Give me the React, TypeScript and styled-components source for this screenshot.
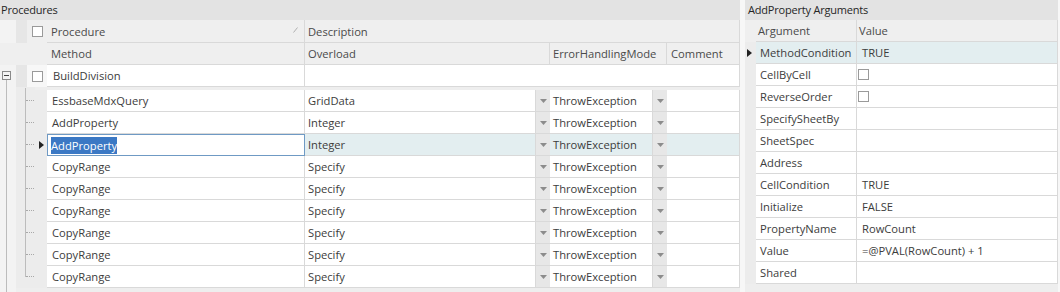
import React from 'react';
import styled, { createGlobalStyle, css } from 'styled-components';

const GlobalStyle = createGlobalStyle`
  html, body {
    margin: 0;
    padding: 0;
    background: #f7f7f7;
  }
  body {
    font-family: "Open Sans", "Noto Sans", sans-serif;
    font-size: 11.2px;
    color: #3c3c3c;
  }
`;

const LINE = '#d9d9d9';
const SELECTED_BG = '#e3eef0';

const Page = styled.div`
  display: flex;
  width: 1060px;
  height: 292px;
  overflow: hidden;
`;

const Panel = styled.div<{ $width?: number }>`
  display: flex;
  flex-direction: column;
  ${p => p.$width ? css`width: ${p.$width}px;` : css`flex: 1; margin: 0 2px 0 5px;`}
  background: #eeeeee;
`;

const PanelTitle = styled.div<{ $pad: number }>`
  height: 20px;
  line-height: 19px;
  padding-left: ${p => p.$pad}px;
  background: #e3e3e3;
  font-size: 11px;
  letter-spacing: -0.2px;
  color: #262626;
`;

const Row = styled.div<{ $h?: number }>`
  display: flex;
  height: ${p => p.$h ?? 22}px;
  flex-shrink: 0;
`;

const Gutter = styled.div<{ $w: number; $bg?: string }>`
  position: relative;
  width: ${p => p.$w}px;
  flex-shrink: 0;
  background: ${p => p.$bg ?? 'transparent'};
  display: flex;
  align-items: center;
  justify-content: center;
`;

const Cell = styled.div<{ $w?: number; $bg?: string; $pad?: number; $header?: boolean }>`
  ${p => p.$w ? css`width: ${p.$w}px; flex-shrink: 0;` : css`flex: 1;`}
  box-sizing: border-box;
  display: flex;
  align-items: center;
  padding-left: ${p => p.$pad ?? 4}px;
  background: ${p => p.$bg ?? '#ffffff'};
  border-right: 1px solid ${LINE};
  border-bottom: 1px solid ${LINE};
  color: ${p => p.$header ? '#4a4a4a' : '#3c3c3c'};
  white-space: nowrap;
  overflow: hidden;
  position: relative;
`;

const FocusCell = styled(Cell)`
  border: 1px solid #6f9ac4;
  padding-left: 3px;
`;

const Highlight = styled.span`
  background: #3b78c4;
  color: #ffffff;
  padding: 1px 0;
`;

const DropButton = styled.div`
  width: 14px;
  flex-shrink: 0;
  box-sizing: border-box;
  background: #e7e7e7;
  border-bottom: 1px solid ${LINE};
  display: flex;
  align-items: center;
  justify-content: center;
`;

const CheckBox = styled.span<{ $shift?: number }>`
  display: inline-block;
  width: 9px;
  height: 9px;
  border: 1px solid #9a9a9a;
  background: #ffffff;
  margin-left: ${p => p.$shift ?? 0}px;
`;

const Expander = styled.span`
  position: absolute;
  left: 2px;
  top: 6px;
  width: 7px;
  height: 7px;
  border: 1px solid #8a8a8a;
  background: #f4f4f4;
  &::after {
    content: '';
    position: absolute;
    left: 1px;
    top: 3px;
    width: 5px;
    height: 1px;
    background: #444;
  }
`;

const VLine = styled.span<{ $x: number; $top?: number; $bottom?: number }>`
  position: absolute;
  left: ${p => p.$x}px;
  top: ${p => p.$top ?? 0}px;
  bottom: ${p => p.$bottom ?? 0}px;
  border-left: 1px solid #bcbcbc;
`;

const HDots = styled.span<{ $x: number; $w: number }>`
  position: absolute;
  left: ${p => p.$x}px;
  top: 10px;
  width: ${p => p.$w}px;
  border-top: 1px dotted #a8a8a8;
`;

const Marker = styled.span<{ $x: number }>`
  position: absolute;
  left: ${p => p.$x}px;
  top: 50%;
  margin-top: -4px;
  width: 0;
  height: 0;
  border-top: 4px solid transparent;
  border-bottom: 4px solid transparent;
  border-left: 5px solid #222;
`;

const SortGlyph = styled.svg`
  position: absolute;
  right: 6px;
  top: 7px;
`;

const Fill = styled.div`
  flex: 1;
  display: flex;
`;

const Spacer = styled.div`
  display: flex;
  height: 3px;
  flex-shrink: 0;
`;

const Arrow = () => (
  <svg width="7" height="4" viewBox="0 0 7 4">
    <polygon points="0,0 7,0 3.5,4" fill="#8c8c8c" />
  </svg>
);

interface ProcRow {
  method: string;
  overload: string;
  selected?: boolean;
}

const procRows: ProcRow[] = [
  { method: 'EssbaseMdxQuery', overload: 'GridData' },
  { method: 'AddProperty', overload: 'Integer' },
  { method: 'AddProperty', overload: 'Integer', selected: true },
  { method: 'CopyRange', overload: 'Specify' },
  { method: 'CopyRange', overload: 'Specify' },
  { method: 'CopyRange', overload: 'Specify' },
  { method: 'CopyRange', overload: 'Specify' },
  { method: 'CopyRange', overload: 'Specify' },
  { method: 'CopyRange', overload: 'Specify' },
];

interface ArgRow {
  name: string;
  value?: string;
  check?: boolean;
  selected?: boolean;
}

const argRows: ArgRow[] = [
  { name: 'MethodCondition', value: 'TRUE', selected: true },
  { name: 'CellByCell', check: true },
  { name: 'ReverseOrder', check: true },
  { name: 'SpecifySheetBy' },
  { name: 'SheetSpec' },
  { name: 'Address' },
  { name: 'CellCondition', value: 'TRUE' },
  { name: 'Initialize', value: 'FALSE' },
  { name: 'PropertyName', value: 'RowCount' },
  { name: 'Value', value: '=@PVAL(RowCount) + 1' },
  { name: 'Shared' },
];

const ProceduresGrid: React.FC = () => (
  <Panel $width={740}>
    <PanelTitle $pad={1}>Procedures</PanelTitle>

    <Row $h={23}>
      <Gutter $w={16} $bg="#f3f3f3" />
      <Gutter $w={11} $bg="#e6e6e6" />
      <Gutter $w={20} $bg="#efefef"><CheckBox /></Gutter>
      <Cell $w={258} $bg="#efefef" $header>
        Procedure
        <SortGlyph width="5" height="6" viewBox="0 0 5 6">
          <line x1="0.5" y1="5.5" x2="4.5" y2="0.5" stroke="#b0b0b0" strokeWidth="1" />
        </SortGlyph>
      </Cell>
      <Cell $bg="#efefef" $pad={3} $header>Description</Cell>
    </Row>

    <Row>
      <Gutter $w={47} $bg="#efefef" />
      <Cell $w={258} $bg="#efefef" $header>Method</Cell>
      <Cell $w={245} $bg="#efefef" $pad={3} $header>Overload</Cell>
      <Cell $w={117} $bg="#efefef" $pad={3} $header>ErrorHandlingMode</Cell>
      <Cell $bg="#efefef" $header>Comment</Cell>
    </Row>

    <Row>
      <Gutter $w={16} $bg="#f3f3f3">
        <Expander />
        <VLine $x={6} $top={15} />
      </Gutter>
      <Gutter $w={11} $bg="#e6e6e6" />
      <Gutter $w={20} $bg="#f7f7f7"><CheckBox /></Gutter>
      <Cell $w={258} $pad={6}>BuildDivision</Cell>
      <Cell />
    </Row>

    <Spacer>
      <Gutter $w={16} $bg="#f3f3f3"><VLine $x={6} /></Gutter>
      <Gutter $w={19} $bg="#ececec"><VLine $x={9} $top={1} /></Gutter>
    </Spacer>

    {procRows.map((r, i) => {
      const last = i === procRows.length - 1;
      const bg = r.selected ? SELECTED_BG : '#ffffff';
      return (
        <Row key={i}>
          <Gutter $w={16} $bg="#f3f3f3"><VLine $x={6} /></Gutter>
          <Gutter $w={19} $bg="#ececec">
            <VLine $x={9} $bottom={last ? 11 : 0} />
            <HDots $x={10} $w={8} />
          </Gutter>
          <Gutter $w={12} $bg="#ececec">
            {r.selected && <Marker $x={4} />}
          </Gutter>
          {r.selected ? (
            <FocusCell $w={258}><Highlight>{r.method}</Highlight></FocusCell>
          ) : (
            <Cell $w={258} $pad={5}>{r.method}</Cell>
          )}
          <Cell $w={231} $bg={bg} $pad={3}>{r.overload}</Cell>
          <DropButton><Arrow /></DropButton>
          <Cell $w={103} $bg={bg} $pad={3}>ThrowException</Cell>
          <DropButton><Arrow /></DropButton>
          <Cell $bg={bg} />
        </Row>
      );
    })}

    <Fill>
      <Gutter $w={16} $bg="#f3f3f3"><VLine $x={6} /></Gutter>
    </Fill>
  </Panel>
);

const ArgumentsGrid: React.FC = () => (
  <Panel>
    <PanelTitle $pad={3}>AddProperty Arguments</PanelTitle>
    <Row>
      <Gutter $w={11} $bg="#efefef" />
      <Cell $w={101} $bg="#efefef" $pad={2} $header>Argument</Cell>
      <Cell $bg="#efefef" $pad={2} $header>Value</Cell>
    </Row>
    {argRows.map((a, i) => {
      const bg = a.selected ? SELECTED_BG : '#ffffff';
      return (
        <Row key={i}>
          <Gutter $w={11} $bg="#ececec">
            {a.selected && <Marker $x={2} />}
          </Gutter>
          <Cell $w={101} $bg={bg} $pad={4}>{a.name}</Cell>
          <Cell $bg={bg} $pad={5}>
            {a.check ? <CheckBox $shift={-4} /> : a.value}
          </Cell>
        </Row>
      );
    })}
  </Panel>
);

export default function App() {
  return (
    <>
      <GlobalStyle />
      <Page>
        <ProceduresGrid />
        <ArgumentsGrid />
      </Page>
    </>
  );
}
